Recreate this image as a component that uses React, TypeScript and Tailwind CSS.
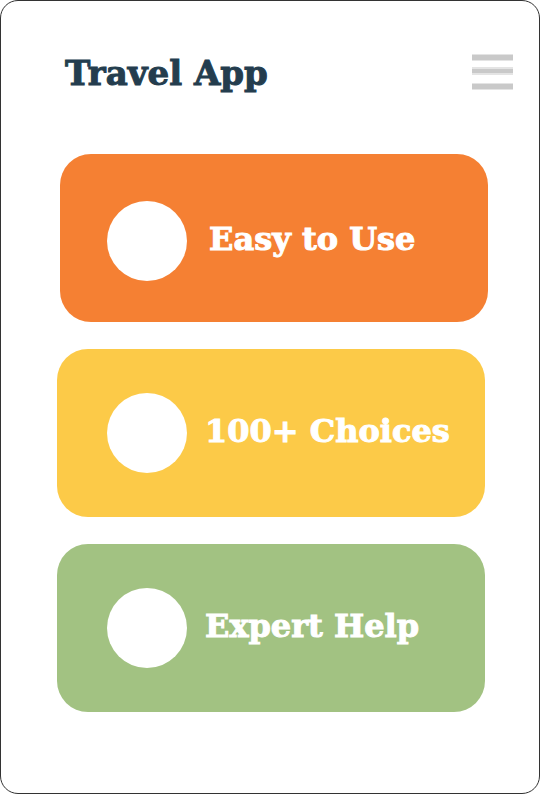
const features = [
  {
    title: "Easy to Use",
    card: "ml-[59px] mr-[51px] bg-[#f58033] pt-[47px] pb-[41px] pl-[47px]",
    gap: "gap-[22px]",
  },
  {
    title: "100+ Choices",
    card: "ml-14 mr-[54px] bg-[#fcca48] py-11 pl-[50px]",
    gap: "gap-[18px]",
  },
  {
    title: "Expert Help",
    card: "ml-14 mr-[54px] bg-[#a2c282] py-11 pl-[50px]",
    gap: "gap-[18px]",
  },
];

function MenuIcon() {
  return (
    <svg width="41" height="37" viewBox="0 0 41 37" aria-hidden="true">
      <g fill="#e4e4e4">
        <rect y="0" width="41" height="7" />
        <rect y="13" width="41" height="8" />
        <rect y="29" width="41" height="7" />
      </g>
      <g fill="#c9c9c9">
        <rect y="1" width="41" height="5" />
        <rect y="15" width="41" height="4" />
        <rect y="30" width="41" height="5" />
      </g>
    </svg>
  );
}

export default function App() {
  return (
    <div className="min-h-screen rounded-[18px] border border-[#333333] bg-white pb-20 font-['Cooper_Black','DejaVu_Serif',serif] font-black">
      <header className="flex items-center justify-between pt-[53px] pr-[26px] pl-16">
        <h1 className="text-[34px] leading-9 text-[#243d4e] [-webkit-text-stroke:1px]">
          Travel App
        </h1>
        <button type="button" aria-label="Menu">
          <MenuIcon />
        </button>
      </header>
      <main className="flex flex-col gap-[27px] pt-[63px]">
        {features.map((f) => (
          <section
            key={f.title}
            className={`flex items-center rounded-[31px] ${f.card} ${f.gap}`}
          >
            <div className="size-20 shrink-0 rounded-full bg-white" />
            <h2 className="pb-1 text-[32px] leading-9 whitespace-nowrap text-white [-webkit-text-stroke:1px]">
              {f.title}
            </h2>
          </section>
        ))}
      </main>
    </div>
  );
}
